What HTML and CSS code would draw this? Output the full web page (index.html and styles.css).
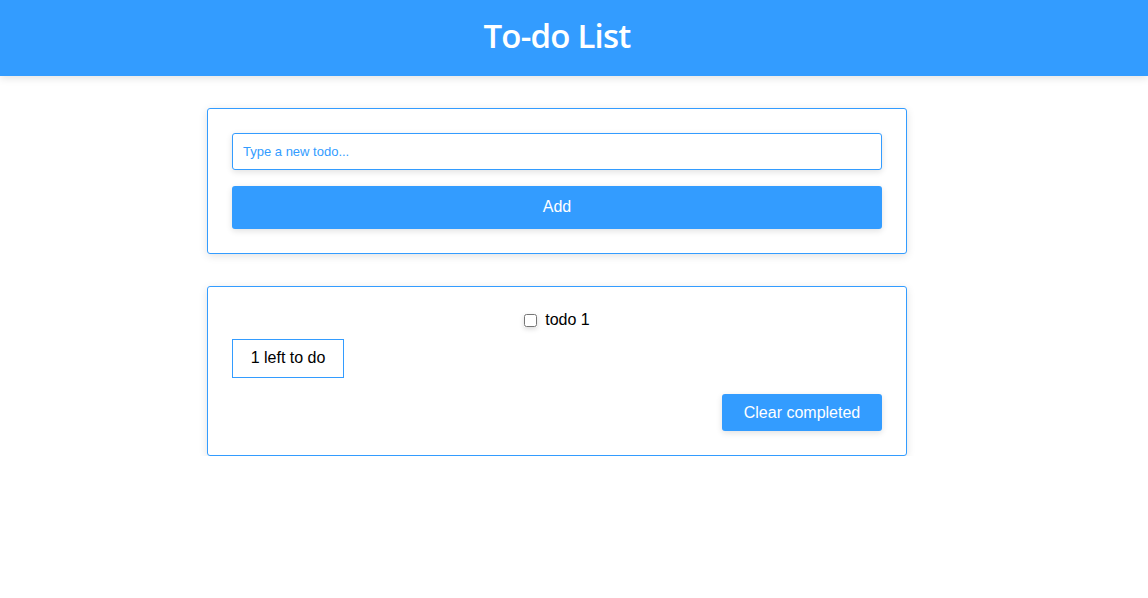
FILE: index.html
```html
<!DOCTYPE html>
<html>
<head>
<meta charset="utf-8">
<title>To-do List</title>
<link rel="stylesheet" href="styles.css">
</head>
<body>
<header class="topbar"><h1 class="title">To-do List</h1></header>
<main class="page">
  <div class="content">
    <section class="card">
      <input class="todo-input" type="text" placeholder="Type a new todo...">
      <button class="btn btn-add">Add</button>
    </section>
    <section class="card">
      <ul class="todo-list">
        <li class="todo-item"><input class="todo-check" type="checkbox"><span>todo 1</span></li>
      </ul>
      <div class="count">1 left to do</div>
      <div class="actions"><button class="btn btn-clear">Clear completed</button></div>
    </section>
  </div>
</main>
</body>
</html>
```
FILE: styles.css
```css
* { box-sizing: border-box; }
body {
  margin: 0;
  font-family: "Liberation Sans", Arial, sans-serif;
  font-size: 16px;
  color: #000;
  background: #fff;
}
.topbar {
  height: 76px;
  background: #339cff;
  display: flex;
  align-items: center;
  justify-content: center;
  padding: 0 34px 6px 0;
  box-shadow: 0 2px 8px rgba(0,0,0,0.12);
}
.title {
  margin: 0;
  font-family: "Open Sans", sans-serif;
  font-weight: 600;
  font-size: 33px;
  color: #fff;
  letter-spacing: -0.8px;
}
.page {
  padding: 32px 34px 0 0;
}
.content {
  width: 700px;
  margin: 0 auto;
  display: flex;
  flex-direction: column;
  gap: 32px;
}
.card {
  border: 1px solid #339cff;
  border-radius: 3px;
  padding: 24px;
  background: #fff;
  box-shadow: 0 2px 8px rgba(0,0,0,0.12);
  display: flex;
  flex-direction: column;
}
.todo-input {
  height: 37px;
  border: 1px solid #339cff;
  border-radius: 3px;
  padding: 0 10px;
  font-family: "Liberation Sans", Arial, sans-serif;
  font-size: 13px;
  color: #339cff;
  box-shadow: 0 2px 6px rgba(0,0,0,0.12);
  outline: none;
}
.todo-input::placeholder { color: #339cff; }
.btn {
  border: none;
  border-radius: 3px;
  background: #339cff;
  color: #fff;
  font-family: "Liberation Sans", Arial, sans-serif;
  font-size: 16px;
  box-shadow: 0 2px 6px rgba(0,0,0,0.12);
  cursor: pointer;
}
.btn-add {
  margin-top: 16px;
  height: 43px;
  padding-bottom: 2px;
}
.todo-list {
  list-style: none;
  margin: 0 0 10px;
  padding: 0;
}
.todo-item {
  display: flex;
  justify-content: center;
  align-items: center;
  height: 18px;
}
.todo-check {
  width: 13px;
  height: 13px;
  margin: 0 8px 0 0;
  box-shadow: 0 2px 5px rgba(0,0,0,0.15);
}
.count {
  align-self: flex-start;
  width: 112px;
  height: 39px;
  border: 1px solid #339cff;
  display: flex;
  align-items: center;
  justify-content: center;
  padding-bottom: 1px;
}
.actions {
  margin-top: 16px;
  display: flex;
  justify-content: flex-end;
}
.btn-clear {
  width: 160px;
  height: 37px;
}
```
